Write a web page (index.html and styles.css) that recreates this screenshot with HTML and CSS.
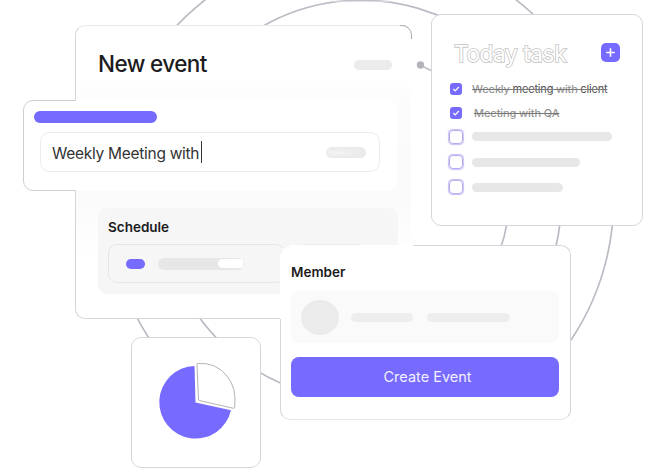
FILE: index.html
```html
<!DOCTYPE html>
<html lang="en">
<head>
<meta charset="utf-8">
<title>New event</title>
<link rel="stylesheet" href="styles.css">
</head>
<body>
<main class="canvas">
  <svg class="orbits" width="663" height="472" viewBox="0 0 663 472" aria-hidden="true">
    <path d="M160 353.500A253 253 0 1 1 571 340"/>
    <path d="M283 384.200A200 200 0 1 1 556 246"/>
    <path d="M421 65.500A147 147 0 0 1 500 250"/>
    <path class="flat" d="M330 1.300H390"/>
    <circle class="dot" cx="420.500" cy="65" r="3.700"/>
  </svg>

  <section class="card event">
    <header class="event-head">
      <h1>New event</h1>
      <span class="bar head-bar"></span>
    </header>
    <div class="schedule">
      <h2>Schedule</h2>
      <div class="slot">
        <span class="bar tag"></span>
        <span class="bar track"><span class="knob"></span></span>
      </div>
      <div class="slot-next"></div>
    </div>
  </section>

  <section class="title-panel">
    <span class="bar label-bar"></span>
    <div class="input">
      <span class="input-text">Weekly Meeting with</span><span class="caret"></span>
      <span class="bar input-bar"></span>
    </div>
  </section>

  <section class="card tasks">
    <header class="tasks-head">
      <h2>Today task</h2>
      <span class="add"><svg width="19" height="19" viewBox="0 0 19 19"><path d="M9.500 5.200v8.600M5.200 9.500h8.600"/></svg></span>
    </header>
    <ul>
      <li><span class="check on"><svg width="12" height="12" viewBox="0 0 12 12"><path d="M3.300 6l1.900 1.900 3.700-3.900"/></svg></span><span class="done first">Weekly <b>meeting</b> with <b>client</b></span></li>
      <li><span class="check on"><svg width="12" height="12" viewBox="0 0 12 12"><path d="M3.300 6l1.900 1.900 3.700-3.900"/></svg></span><span class="done second">Meeting with QA</span></li>
      <li><span class="check"></span><span class="bar long"></span></li>
      <li><span class="check"></span><span class="bar mid"></span></li>
      <li><span class="check"></span><span class="bar short"></span></li>
    </ul>
  </section>

  <section class="card chart">
    <svg width="130" height="130" viewBox="0 0 130 130" role="img" aria-label="Pie chart">
      <path class="share" d="M63.500 29A36.300 36.300 0 1 0 100 73.300L64.500 65.500z"/>
      <path class="rest" d="M66.500 26.500Q85 25 96 39Q106 51 103.600 70.500Q103.300 71.500 102 71.200L68.300 63.500Q67.600 63.200 67.500 62.300L66 27.800Q65.900 26.600 66.500 26.500z"/>
    </svg>
  </section>

  <section class="card member">
    <h2>Member</h2>
    <div class="person">
      <span class="avatar"></span>
      <span class="bar name"></span>
      <span class="bar role"></span>
    </div>
    <button type="button"><span>Create Event</span></button>
  </section>
</main>
</body>
</html>
```
FILE: styles.css
```css
* { box-sizing: border-box; }
body { margin: 0; background: #fff; color: #1c1c1e; font-family: Inter, "Liberation Sans", sans-serif; }
h1, h2, ul { margin: 0; padding: 0; font-weight: 500; list-style: none; }
h1, h2, .input-text, .done, button { white-space: nowrap; }

.canvas { position: relative; width: 663px; height: 472px; overflow: hidden; }
.orbits { position: absolute; inset: 0; fill: none; stroke: #bcbbc4; stroke-width: 1.7; }
.orbits .flat { stroke: #dcdce0; stroke-width: 1; }
.orbits .dot { fill: #b4b3ba; stroke: none; }

.card { position: absolute; background: #fff; border: 1px solid #d6d5dc; border-radius: 10px; }
.bar { display: block; flex: none; border-radius: 10px; background: #ebebeb; }

/* Event card */
.event {
  left: 75px; top: 25px; width: 337px; height: 294px; padding: 23px 14px 0 22px;
  border-top-color: #e9e9ec; border-right-color: transparent;
  background: linear-gradient(#fff 54px, #fcfcfc 75px, #fafafa 165px, #fbfbfb 185px, #fff 235px) padding-box;
}
.event::after {
  content: ""; position: absolute; inset: -1px; border: 1px solid #aaa9b0; border-radius: 10px; clip-path: inset(0 0 280px 325px);
}
.event-head { display: flex; align-items: center; justify-content: space-between; height: 30px; padding-right: 5px; }
.event h1 { font-size: 22.500px; line-height: 30px; letter-spacing: -.6px; font-weight: 450; }
.head-bar { width: 38px; height: 10px; margin-top: 1px; }
.schedule {
  display: grid; grid-template: 32px 39px / 177px 57px; column-gap: 18px; width: 300px; height: 86px;
  margin-top: 129px; padding: 4px 10px; border-radius: 9px; background: #f6f6f6;
}
.schedule h2 { grid-column: 1 / 3; font-size: 13.500px; line-height: 30px; font-weight: 600; }
.slot { display: flex; align-items: center; gap: 13px; height: 39px; padding-left: 17px; border: 1px solid #e6e6e6; border-radius: 9px; }
.slot-next { border-top: 1px solid #ebebeb; height: 8px; }
.tag { width: 19px; height: 10px; background: #766aff; }
.track { display: flex; align-items: center; justify-content: flex-end; width: 86px; height: 12px; padding: 1px; background: #e7e7e7; }
.knob { width: 25px; height: 9px; border-radius: 12px 6px 6px 12px; background: #fff; }

/* Title field */
.title-panel {
  position: absolute; left: 23px; top: 100px; width: 374px; height: 91px; padding: 11px 17px 0 11px;
  border-radius: 10px; background: #fff;
}
.title-panel::after {
  content: ""; position: absolute; inset: 0; border: 1px solid #cfced5; border-radius: 10px; clip-path: inset(0 321px 0 0);
}
.label-bar { width: 123px; height: 12px; background: #766aff; }
.input {
  display: flex; align-items: center; width: 340px; height: 40px; margin: 9px 0 0 6px; padding: 0 13px 0 11px;
  border: 1px solid #ececec; border-radius: 10px;
}
.input-text { width: 149px; padding-top: 2px; font-size: 15.500px; letter-spacing: -.28px; color: #333; }
.caret { width: 1px; height: 22px; background: #333; }
.input-bar { width: 40px; height: 11px; margin-left: auto; background: radial-gradient(ellipse at 30% 50%, #f3f3f3, #eaeaea 60%); }

/* Tasks */
.tasks { left: 431px; top: 14px; width: 212px; height: 212px; padding: 25px 22px 0 18px; }
.tasks-head { display: flex; align-items: center; justify-content: space-between; height: 26px; padding-left: 4px; }
.tasks h2 {
  padding-top: 2px; font-size: 22.500px; line-height: 26px; letter-spacing: -.35px; font-weight: 400;
  color: #fff; -webkit-text-stroke: 1.600px #c4c4c4; paint-order: stroke fill;
}
.add { width: 19px; height: 19px; margin-top: -2px; border-radius: 5px; background: #766aff; }
svg { display: block; }
.add path, .check path { fill: none; stroke: #fff; stroke-width: 1.600; }
.check path { stroke-width: 1.200; }
.tasks ul { display: grid; grid-template-rows: 25px 24px 23px 28px 22px; margin-top: 10px; }
.tasks li { display: flex; align-items: center; gap: 9px; }
.check { display: block; flex: none; width: 14px; height: 14px; border: 1.500px solid #b5aaf0; border-radius: 4px; box-shadow: 0 0 1px 0.500px #c9c2f5; margin-left: -1px; }
.check.on { width: 12px; height: 12px; margin: 0 1px 0 0; border: 0; border-radius: 3px; background: #766aff; box-shadow: none; }
.tasks .bar { height: 9px; background: #e7e7e7; }
.long { width: 140px; } .mid { width: 108px; } .short { width: 91px; }
.done { font-size: 11px; line-height: 14px; letter-spacing: -.17px; color: #979797; text-decoration: line-through #777; }
.done b { font-weight: 400; color: #555; }
.second { padding-left: 2px; letter-spacing: -.1px; }

/* Chart */
.chart { left: 131px; top: 337px; width: 130px; height: 131px; }
.chart svg { margin: -1px; }
.share { fill: #766aff; }
.rest { fill: #fff; stroke: #aaa; stroke-width: .9; }

/* Member */
.member { left: 280px; top: 245px; width: 291px; height: 175px; padding: 14px 11px 0 10px; border-bottom-color: #e6e6ea; }
.member::before {
  content: ""; position: absolute; left: -1px; top: -1px; width: 132px; height: 73px;
  border: solid #fff; border-width: 1px 0 0 1px; border-radius: 10px 0 0 0;
}
.member h2 { font-size: 13.500px; line-height: 24px; font-weight: 600; }
.person { display: flex; align-items: center; height: 52px; margin-top: 7px; padding-left: 10px; border-radius: 8px; background: #fafafa; }
.avatar { width: 38px; height: 35px; border-radius: 50%; background: #ebebeb; }
.person .bar { height: 9px; background: #ededed; }
.name { width: 62px; margin-left: 12px; } .role { width: 83px; margin-left: 14px; }
button {
  display: block; width: 100%; height: 40px; margin-top: 14px; padding: 0 0 0 5px; border: 0; border-radius: 8px;
  background: #766aff; color: #f3f1ff; font: 400 14.500px/40px Inter, sans-serif;
}
```
